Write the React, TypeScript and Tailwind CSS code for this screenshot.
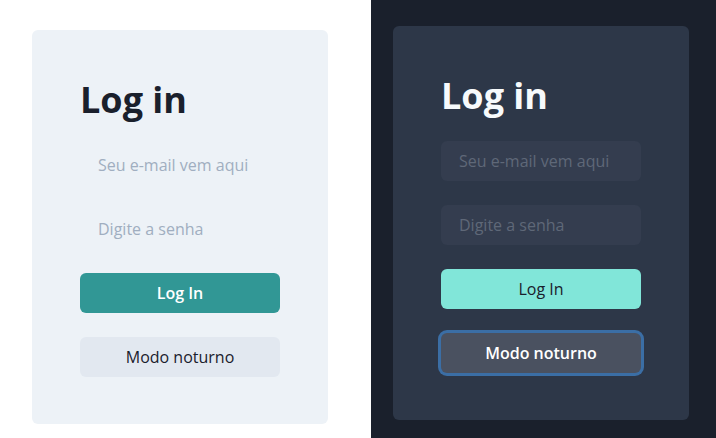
const LoginCard = ({ dark }: { dark: boolean }) => {
  return (
    <div
      className={
        dark
          ? "w-[296px] h-[394px] rounded-md bg-[#2d3748] px-12 pt-12"
          : "w-[296px] h-[394px] rounded-md bg-[#edf2f7] px-12 pt-12"
      }
    >
      <h2
        className={
          dark
            ? "text-[36px] font-bold leading-[43px] text-[#f7fafc] mb-6"
            : "text-[36px] font-bold leading-[43px] text-[#1a202c] mb-6"
        }
      >
        Log in
      </h2>
      <div className="flex flex-col gap-6">
        <input
          placeholder="Seu e-mail vem aqui"
          className={
            dark
              ? "h-10 w-[200px] rounded-md bg-[#343d4f] px-[18px] text-base outline-none placeholder:text-[#5f6878]"
              : "h-10 w-[200px] rounded-md bg-[#edf2f7] px-[18px] text-base outline-none placeholder:text-[#a0aec0]"
          }
        />
        <input
          type="password"
          placeholder="Digite a senha"
          className={
            dark
              ? "h-10 w-[200px] rounded-md bg-[#343d4f] px-[18px] text-base outline-none placeholder:text-[#5f6878]"
              : "h-10 w-[200px] rounded-md bg-[#edf2f7] px-[18px] text-base outline-none placeholder:text-[#a0aec0]"
          }
        />
        <button
          className={
            dark
              ? "h-10 w-[200px] rounded-md bg-[#81e6d9] text-base font-normal text-[#1a202c]"
              : "h-10 w-[200px] rounded-md bg-[#319795] text-base font-semibold text-white"
          }
        >
          Log In
        </button>
        <button
          className={
            dark
              ? "h-10 w-[200px] rounded-md bg-[#4a5160] text-base font-semibold text-white ring-[3px] ring-[#3b6ea5]"
              : "h-10 w-[200px] rounded-md bg-[#e2e8f0] text-base font-medium text-[#1a202c]"
          }
        >
          Modo noturno
        </button>
      </div>
    </div>
  );
};

export default function App() {
  return (
    <div
      className="flex h-[438px] w-[716px]"
      style={{ fontFamily: '"Open Sans", "Noto Sans", sans-serif' }}
    >
      <div className="w-[371px] bg-white pl-8 pt-[30px]">
        <LoginCard dark={false} />
      </div>
      <div className="flex-1 bg-[#1a202c] pl-[22px] pt-[26px]">
        <LoginCard dark={true} />
      </div>
    </div>
  );
}
